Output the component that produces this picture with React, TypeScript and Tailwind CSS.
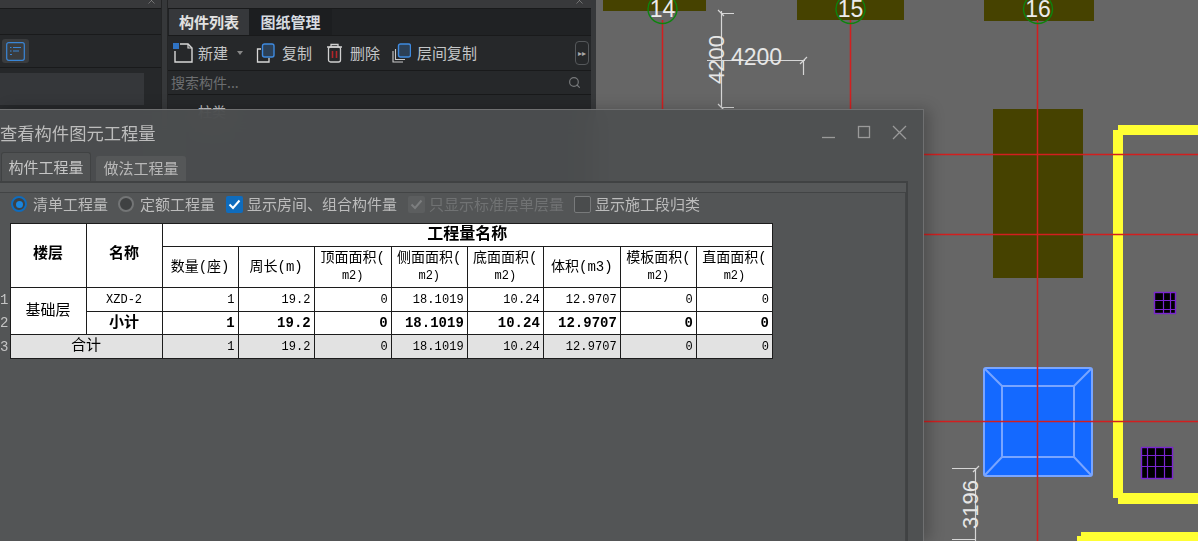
import { Search, X } from "lucide-react";

function CadCanvas() {
  const red = "#d21f1f";
  const dim = "#d6d6d6";
  const purple = "#7a25d0";
  return (
    <svg className="absolute inset-0" width="1198" height="541" viewBox="0 0 1198 541">
      <rect x="603" y="-2" width="103" height="13" fill="#464200" />
      <rect x="797" y="-2" width="107" height="22" fill="#464200" />
      <rect x="984" y="-2" width="110" height="23" fill="#464200" />
      <rect x="993" y="109" width="90" height="169" fill="#464200" />
      <path d="M1118 125H1198V135H1123V493H1198V504H1118V498H1113V130H1118Z" fill="#ffff33" />
      <path d="M1081 532H1198V541H1077V536H1081Z" fill="#ffff33" />
      <g stroke="#79a5ff" strokeWidth="2" fill="#1469ff">
        <rect x="984" y="368" width="108" height="108" rx="2" />
        <rect x="1002" y="386" width="72" height="71" fill="none" />
        <path d="M985 369L1002 386M1091 369L1074 386M985 475L1002 457M1091 475L1074 457" fill="none" />
      </g>
      <g>
        <rect x="1154.5" y="292.5" width="21" height="21" fill="#000" stroke={purple} strokeWidth="1.4" />
        <path d="M1163.5 293V313M1170.5 293V313M1155 300.5H1175M1155 309.5H1175" stroke={purple} strokeWidth="1.2" />
        <rect x="1141.5" y="447.5" width="31" height="31" fill="#000" stroke={purple} strokeWidth="1.4" />
        <path d="M1147.5 448V478M1155.5 448V478M1164.5 448V478M1142 455.5H1172M1142 466.5H1172" stroke={purple} strokeWidth="1.2" />
      </g>
      <g stroke={red} strokeWidth="1.5">
        <path d="M662.5 20V110M850.5 20V110M1037.5 20V541M924 154.5H1198M924 234.5H1198M924 421.5H1198" />
      </g>
      <g stroke="#0d850d" fill="none" strokeWidth="1.4">
        <circle cx="662.5" cy="9" r="14.5" />
        <circle cx="850.5" cy="9" r="14.5" />
        <circle cx="1038" cy="9" r="14.5" />
      </g>
      <g fill="#ececec" fontFamily="'Liberation Sans', sans-serif" fontSize="23" textAnchor="middle">
        <text x="662.5" y="17">14</text>
        <text x="850.5" y="17">15</text>
        <text x="1038" y="17">16</text>
      </g>
      <g stroke={dim} strokeWidth="1.2" fill="none">
        <path d="M721.5 11V108M721 13.5H734M721 107.5H734M718 10L724 16M718 104L724 110" />
        <path d="M707 60.5H805M803.5 60V75M800 64L807 57" />
        <path d="M975.5 468V541M952 468.5H975M952 539.5H975M973 472L979 466" />
      </g>
      <g fill="#e6e6e6" fontFamily="'Liberation Sans', sans-serif" fontSize="22">
        <text x="731" y="65" fontSize="23">4200</text>
        <text transform="translate(724 84) rotate(-90)">4200</text>
        <text transform="translate(978 529) rotate(-90)">3196</text>
      </g>
    </svg>
  );
}

function CloseMark() {
  return <X size={11} strokeWidth={1.5} className="text-[#8a8a8a]" />;
}

function NewIcon() {
  return (
    <svg width="20" height="22" viewBox="0 0 20 22" fill="none">
      <path d="M2 9V20H19V6L15 2H7" stroke="#d8d8d8" strokeWidth="1.4" />
      <path d="M15 2V6H19" stroke="#d8d8d8" strokeWidth="1.2" />
      <rect x="0" y="1" width="6" height="6" fill="#2f73c4" />
    </svg>
  );
}

function CopyIcon() {
  return (
    <svg width="19" height="20" viewBox="0 0 19 20" fill="none">
      <path d="M5 6H1.500V19H13V15" stroke="#d8d8d8" strokeWidth="1.3" />
      <rect x="6.500" y="1" width="11.500" height="13" rx="2" fill="#2c4056" stroke="#3e8ae0" strokeWidth="1.4" />
    </svg>
  );
}

function TrashIcon() {
  return (
    <svg width="17" height="20" viewBox="0 0 17 20" fill="none">
      <path d="M1 4H16M5 4V1.500H12V4" stroke="#d0d0d0" strokeWidth="1.3" />
      <rect x="2.500" y="4" width="12" height="15" rx="2" stroke="#d0d0d0" strokeWidth="1.3" />
      <path d="M6.500 8V15M10.500 8V15" stroke="#b3262a" strokeWidth="1.6" />
    </svg>
  );
}

function LayerCopyIcon() {
  return (
    <svg width="19" height="20" viewBox="0 0 19 20" fill="none">
      <path d="M1 8V19H11M3.500 6V16.500H13" stroke="#c8c8c8" strokeWidth="1.100" />
      <rect x="6.500" y="1" width="12" height="13" rx="2" fill="#2c4056" stroke="#3e8ae0" strokeWidth="1.4" />
    </svg>
  );
}

function ListIcon() {
  return (
    <svg width="19" height="19" viewBox="0 0 19 19" fill="none">
      <rect x="0.700" y="0.700" width="17.600" height="17.600" rx="2" stroke="#3a86d6" strokeWidth="1.2" />
      <path d="M4 5.500H5.500M7 5.500H15M4 9H5.500M7 9H13M4 12.500H6" stroke="#3a86d6" strokeWidth="1.2" />
    </svg>
  );
}

function WindowControls() {
  return (
    <svg width="86" height="16" viewBox="0 0 86 16" fill="none" stroke="#9a9a9a" strokeWidth="1.3">
      <path d="M0 12.500H13" />
      <rect x="36.500" y="1.500" width="11" height="11" />
      <path d="M71 1L84 14M84 1L71 14" />
    </svg>
  );
}

function ToolButton({ icon, label, className }: { icon: React.ReactNode; label: string; className: string }) {
  return (
    <div className={`flex items-center ${className}`}>
      {icon}
      <span className="text-[15px] text-[#c4c6c8]">{label}</span>
    </div>
  );
}

function BackgroundPanels() {
  return (
    <div className="relative flex h-[541px] w-[596px] bg-[#37393b]">
      <div className="flex w-[161px] flex-col bg-[#26282a]">
        <div className="flex h-[8px] justify-end overflow-hidden bg-[#38393b] pr-[4px]">
          <div className="-mt-[5px]"><CloseMark /></div>
        </div>
        <div className="h-[27px] border-y border-[#191a1b]" />
        <div className="flex h-[33px] items-center border-b border-[#191a1b] pl-[2px]">
          <div className="flex h-[24px] w-[27px] items-center justify-center rounded-[3px] bg-[#3a3c3e]">
            <ListIcon />
          </div>
        </div>
        <div className="mt-[5px] h-[32px] w-[144px] bg-[#35373a]" />
      </div>
      <div className="w-[7px] border-x border-[#242526] bg-[#36383a]" />
      <div className="flex w-[423px] flex-col bg-[#26282a]">
        <div className="flex h-[8px] justify-end overflow-hidden bg-[#38393b] pr-[6px]">
          <div className="-mt-[5px]"><CloseMark /></div>
        </div>
        <div className="flex h-[28px] items-end border-y border-[#191a1b] bg-[#202224] pl-px">
          <div className="flex h-[26px] w-[80px] items-center justify-center bg-[#36383b] text-[15px] font-bold text-[#e2e2e2]">构件列表</div>
          <div className="flex h-[26px] w-[83px] items-center justify-center bg-[#1c1e20] text-[15px] font-bold text-[#d6dbe0]">图纸管理</div>
        </div>
        <div className="flex h-[35px] items-center border-b border-[#191a1b] pl-[5px]">
          <ToolButton icon={<NewIcon />} label="新建" className="gap-[5px]" />
          <div className="ml-[9px] h-0 w-0 border-x-[3px] border-t-[4px] border-x-transparent border-t-[#888]" />
          <ToolButton icon={<CopyIcon />} label="复制" className="ml-[13px] gap-[7px]" />
          <ToolButton icon={<TrashIcon />} label="删除" className="ml-[14px] gap-[7px]" />
          <ToolButton icon={<LayerCopyIcon />} label="层间复制" className="ml-[12px] gap-[6px]" />
          <div className="ml-[98px] flex h-[24px] w-[14px] items-center justify-center rounded-[4px] border border-[#55585b] text-[8px] text-[#aaa]">▸▸</div>
        </div>
        <div className="flex h-[24px] items-center justify-between border-b border-[#191a1b] pl-[3px] pr-[10px]">
          <span className="text-[14px] text-[#6c6e70]">搜索构件...</span>
          <Search size={13} strokeWidth={2.2} className="text-[#77797b]" />
        </div>
        <div className="pl-[30px] pt-[6px] text-[14px] text-[#c4c6c8]">柱类</div>
      </div>
    </div>
  );
}

function Radio({ on }: { on?: boolean }) {
  return (
    <span className={`flex h-[16px] w-[16px] items-center justify-center rounded-full border-2 ${on ? "border-[#0f6cbd]" : "border-[#737576]"} bg-[#3f4142]`}>
      {on && <span className="h-[7px] w-[7px] rounded-full bg-[#1b86de]" />}
    </span>
  );
}

function Check({ kind }: { kind: "on" | "disabled" | "off" }) {
  const cls =
    kind === "on"
      ? "bg-[#0f6cbd]"
      : kind === "disabled"
        ? "bg-[#5c5e5f]"
        : "border border-[#787a7b] bg-[#4a4c4d]";
  return (
    <span className={`flex h-[17px] w-[17px] items-center justify-center rounded-[2px] ${cls}`}>
      {kind !== "off" && (
        <svg width="13" height="11" viewBox="0 0 13 11" fill="none">
          <path d="M1.500 5.500L5 9L11.500 1.500" stroke={kind === "on" ? "#fff" : "#7c7e7f"} strokeWidth="2" />
        </svg>
      )}
    </span>
  );
}

const numbers = ["1", "19.2", "0", "18.1019", "10.24", "12.9707", "0", "0"];

function Nums({ bold }: { bold?: boolean }) {
  return (
    <>
      {numbers.map((n, i) => (
        <td
          key={i}
          className={`border border-[#1c1c1c] pr-[3px] text-right font-['Liberation_Mono',monospace] leading-none ${bold ? "text-[14px] font-bold" : "text-[12px] tracking-[0.1px]"}`}
        >
          {n}
        </td>
      ))}
    </>
  );
}

function HeadCell({ a, b }: { a: string; b?: string }) {
  return (
    <td className="border border-[#1c1c1c] text-center text-[14px] leading-[17px]">
      {a}
      {b && (
        <>
          <br />
          <span className="text-[12px]">{b}</span>
        </>
      )}
    </td>
  );
}

function Table() {
  const cols = [10, 76, 76, 76, 76, 77, 76, 76, 77, 76, 76];
  const gutter = "border-0 bg-[#535556] text-left text-[14px] leading-none text-[#c4c4c4] font-['Liberation_Mono',monospace]";
  return (
    <table className="w-[773px] table-fixed border-collapse font-['Liberation_Mono','Noto_Sans_CJK_SC',monospace] text-black">
      <colgroup>
        {cols.map((w, i) => (
          <col key={i} style={{ width: w }} />
        ))}
      </colgroup>
      <tbody>
        <tr className="h-[23px] bg-white">
          <td rowSpan={2} className="bg-[#535556]" />
          <td rowSpan={2} className="border border-[#1c1c1c] pb-[1px] text-center text-[15px] font-bold">楼层</td>
          <td rowSpan={2} className="border border-[#1c1c1c] pb-[1px] text-center text-[15px] font-bold">名称</td>
          <td colSpan={8} className="border border-[#1c1c1c] text-center text-[16px] font-bold leading-none">工程量名称</td>
        </tr>
        <tr className="h-[41px] bg-white">
          <HeadCell a="数量(座)" />
          <HeadCell a="周长(m)" />
          <HeadCell a="顶面面积(" b="m2)" />
          <HeadCell a="侧面面积(" b="m2)" />
          <HeadCell a="底面面积(" b="m2)" />
          <HeadCell a="体积(m3)" />
          <HeadCell a="模板面积(" b="m2)" />
          <HeadCell a="直面面积(" b="m2)" />
        </tr>
        <tr className="h-[24px] bg-white">
          <td className={gutter}>1</td>
          <td rowSpan={2} className="border border-[#1c1c1c] text-center text-[15px] leading-none">基础层</td>
          <td className="border border-[#1c1c1c] text-center text-[12px] leading-none">XZD-2</td>
          <Nums />
        </tr>
        <tr className="h-[23px] bg-white">
          <td className={gutter}>2</td>
          <td className="border border-[#1c1c1c] text-center text-[15px] font-bold leading-none">小计</td>
          <Nums bold />
        </tr>
        <tr className="h-[24px] bg-[#e2e2e2]">
          <td className={gutter}>3</td>
          <td colSpan={2} className="border border-[#1c1c1c] text-center text-[15px] leading-none">合计</td>
          <Nums />
        </tr>
      </tbody>
    </table>
  );
}

function Dialog() {
  return (
    <div className="absolute left-0 top-[109px] flex h-[432px] w-[924px] flex-col border-r border-t border-[#6f7071] bg-[#4e5051]/[0.93] shadow-[6px_0_14px_rgba(0,0,0,0.22)] backdrop-blur-md">
      <div className="flex h-[41px] shrink-0 items-center justify-between pr-[15px] pt-[5px]">
        <span className="text-[17.300px] text-[#bdbdbd]">查看构件图元工程量</span>
        <WindowControls />
      </div>
      <div className="flex h-[30px] shrink-0 items-end gap-[5px] pl-px">
        <div className="flex h-[29px] w-[90px] items-center justify-center rounded-t-[3px] border-x border-t border-[#404243] bg-[#505253] text-[15px] text-[#c6c6c6]">构件工程量</div>
        <div className="flex h-[25px] w-[90px] items-center justify-center rounded-t-[3px] bg-[#555758] text-[15px] text-[#b8b8b8]">做法工程量</div>
      </div>
      <div className="flex w-[908px] flex-1 flex-col border-r-2 border-t-2 border-[#404243] bg-[#565859]">
        <div className="h-[9px] shrink-0" />
        <div className="flex min-h-0 flex-1 flex-col border-r border-t border-[#424445] bg-[#535556]">
          <div className="flex h-[22px] shrink-0 items-center pl-[11px] text-[15px] text-[#bcbcbc]">
            <Radio on />
            <span className="ml-[6px]">清单工程量</span>
            <span className="ml-[10px]"><Radio /></span>
            <span className="ml-[6px]">定额工程量</span>
            <span className="ml-[11px]"><Check kind="on" /></span>
            <span className="ml-[4px]">显示房间、组合构件量</span>
            <span className="ml-[11px]"><Check kind="disabled" /></span>
            <span className="ml-[4px] text-[#707273]">只显示标准层单层量</span>
            <span className="ml-[10px]"><Check kind="off" /></span>
            <span className="ml-[4px]">显示施工段归类</span>
          </div>
          <div className="mt-[8px]">
            <Table />
          </div>
        </div>
      </div>
    </div>
  );
}

export default function App() {
  return (
    <div className="relative h-[541px] w-[1198px] overflow-hidden bg-[#666666] font-['Noto_Sans_CJK_SC',sans-serif] blur-[0.35px]">
      <CadCanvas />
      <BackgroundPanels />
      <Dialog />
    </div>
  );
}
